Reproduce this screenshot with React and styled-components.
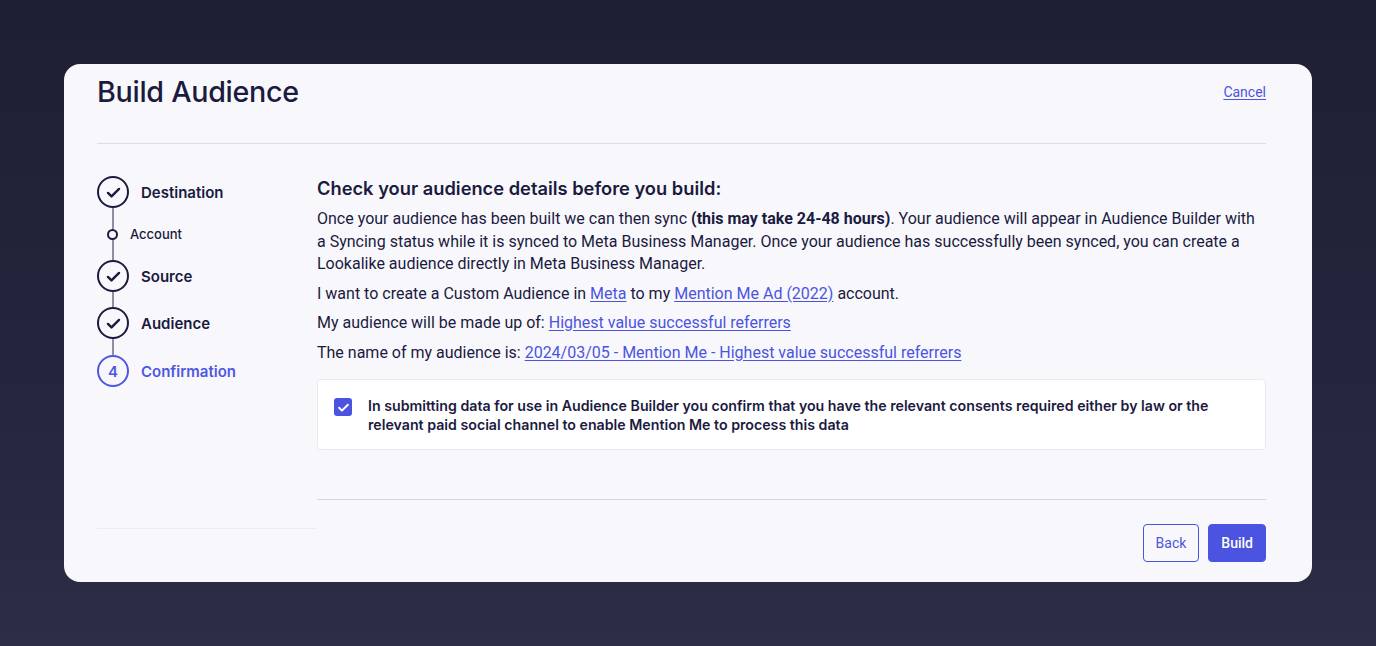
import styled, { createGlobalStyle } from "styled-components";

const GlobalStyle = createGlobalStyle`
  html, body {
    margin: 0;
    padding: 0;
  }
  body {
    background: linear-gradient(180deg, #1e1f35 0%, #25263d 60%, #2c2d46 100%);
    min-height: 646px;
    font-family: Roboto, "Liberation Sans", sans-serif;
    color: #1b1a3f;
  }
`;

const Page = styled.div`
  padding: 64px;
  box-sizing: border-box;
  width: 1376px;
  height: 646px;
`;

const Card = styled.div`
  background: #f8f8fc;
  border-radius: 16px;
  height: 518px;
  box-sizing: border-box;
  padding: 10px 46px 21px 33px;
  display: flex;
  flex-direction: column;
`;

const Header = styled.div`
  display: flex;
  justify-content: space-between;
  align-items: center;
  padding-bottom: 33px;
  border-bottom: 1px solid #dedde6;
`;

const Title = styled.h1`
  margin: 0;
  font-family: Inter, "Noto Sans", sans-serif;
  font-weight: 500;
  font-size: 28.7px;
  line-height: 36px;
  letter-spacing: -0.3px;
  color: #1b1a3f;
`;

const TextLink = styled.a`
  color: #4b54e0;
  text-decoration: underline;
  text-underline-offset: 2px;
  font-size: ${(p) => p.size || "inherit"};
  cursor: pointer;
`;

const Body = styled.div`
  display: grid;
  grid-template-columns: 220px 1fr;
  padding-top: 32px;
  flex: 1;
`;

const Aside = styled.div`
  height: 353px;
  box-sizing: border-box;
  border-bottom: 1px solid #ececf3;
  display: flex;
  flex-direction: column;
`;

const StepRow = styled.div`
  display: flex;
  align-items: center;
  gap: 12px;
`;

const Circle = styled.div`
  width: 32px;
  height: 32px;
  box-sizing: border-box;
  border-radius: 50%;
  border: 2px solid ${(p) => (p.active ? "#4d57e3" : "#1b1a3f")};
  color: ${(p) => (p.active ? "#4d57e3" : "#1b1a3f")};
  display: flex;
  align-items: center;
  justify-content: center;
  font-family: Inter, "Noto Sans", sans-serif;
  font-weight: 600;
  font-size: 15px;
  flex-shrink: 0;
`;

const StepLabel = styled.span`
  font-family: Inter, "Noto Sans", sans-serif;
  font-weight: 600;
  font-size: 15px;
  color: ${(p) => (p.active ? "#4d57e3" : "#1b1a3f")};
`;

const SubRow = styled.div`
  display: flex;
  align-items: center;
  gap: 12px;
  height: 11px;
  padding-left: 10px;
`;

const Dot = styled.div`
  width: 11px;
  height: 11px;
  box-sizing: border-box;
  border-radius: 50%;
  border: 2px solid #1b1a3f;
`;

const SubLabel = styled.span`
  font-family: Inter, "Noto Sans", sans-serif;
  font-weight: 500;
  font-size: 13px;
  line-height: 11px;
  color: #1b1a3f;
`;

const Connector = styled.div`
  width: 2px;
  height: ${(p) => p.h}px;
  background: #8f8ea3;
  margin-left: 15px;
`;

const Main = styled.div`
  display: flex;
  flex-direction: column;
`;

const Heading = styled.h2`
  margin: -2px 0 6px;
  font-family: Inter, "Noto Sans", sans-serif;
  font-weight: 600;
  font-size: 18.3px;
  line-height: 28px;
  color: #1b1a3f;
`;

const Para = styled.p`
  margin: 0 0 7px;
  font-size: 16px;
  line-height: 22.5px;
  color: #1b1a3f;
`;

const ConsentBox = styled.label`
  margin-top: 8px;
  background: #ffffff;
  border: 1px solid #e9e9f0;
  border-radius: 4px;
  padding: 16px 16px 15px 16px;
  display: flex;
  gap: 16px;
  align-items: flex-start;
`;

const CheckBox = styled.span`
  width: 18px;
  height: 18px;
  border-radius: 3px;
  background: #4b54e0;
  display: flex;
  align-items: center;
  justify-content: center;
  flex-shrink: 0;
  margin-top: 2px;
`;

const ConsentText = styled.span`
  font-family: Inter, "Noto Sans", sans-serif;
  font-weight: 600;
  font-size: 14.2px;
  line-height: 19px;
  color: #1b1a3f;
`;

const Divider = styled.div`
  margin-top: 49px;
  border-top: 1px solid #d6d5de;
`;

const Footer = styled.div`
  display: flex;
  justify-content: flex-end;
  gap: 9px;
  margin-top: 24px;
`;

const Button = styled.button`
  height: 38px;
  padding: 0 12px;
  border-radius: 4px;
  border: 1px solid #4b54e0;
  background: ${(p) => (p.primary ? "#4b54e0" : "transparent")};
  color: ${(p) => (p.primary ? "#ffffff" : "#4b54e0")};
  font-family: Roboto, "Liberation Sans", sans-serif;
  font-weight: ${(p) => (p.primary ? 500 : 400)};
  font-size: 14px;
  cursor: pointer;
`;

const Check = ({ size = 14, color = "currentColor", width = 2.6 }) => (
  <svg width={size} height={size} viewBox="0 0 24 24" fill="none">
    <path
      d="M5 12.5l4.5 4.5L19 7.5"
      stroke={color}
      strokeWidth={width}
      strokeLinecap="round"
      strokeLinejoin="round"
    />
  </svg>
);

export default function App() {
  return (
    <>
      <GlobalStyle />
      <Page>
        <Card>
          <Header>
            <Title>Build Audience</Title>
            <TextLink size="14px">Cancel</TextLink>
          </Header>
          <Body>
            <Aside>
              <StepRow>
                <Circle>
                  <Check size={19} width={3} />
                </Circle>
                <StepLabel>Destination</StepLabel>
              </StepRow>
              <Connector h={21} />
              <SubRow>
                <Dot />
                <SubLabel>Account</SubLabel>
              </SubRow>
              <Connector h={20} />
              <StepRow>
                <Circle>
                  <Check size={19} width={3} />
                </Circle>
                <StepLabel>Source</StepLabel>
              </StepRow>
              <Connector h={15} />
              <StepRow>
                <Circle>
                  <Check size={19} width={3} />
                </Circle>
                <StepLabel>Audience</StepLabel>
              </StepRow>
              <Connector h={16} />
              <StepRow>
                <Circle active>4</Circle>
                <StepLabel active>Confirmation</StepLabel>
              </StepRow>
            </Aside>
            <Main>
              <Heading>Check your audience details before you build:</Heading>
              <Para>
                Once your audience has been built we can then sync{" "}
                <b>(this may take 24-48 hours)</b>. Your audience will appear in
                Audience Builder with a Syncing status while it is synced to Meta
                Business Manager. Once your audience has successfully been synced,
                you can create a Lookalike audience directly in Meta Business
                Manager.
              </Para>
              <Para>
                I want to create a Custom Audience in <TextLink>Meta</TextLink> to
                my <TextLink>Mention Me Ad (2022)</TextLink> account.
              </Para>
              <Para>
                My audience will be made up of:{" "}
                <TextLink>Highest value successful referrers</TextLink>
              </Para>
              <Para>
                The name of my audience is:{" "}
                <TextLink>
                  2024/03/05 - Mention Me - Highest value successful referrers
                </TextLink>
              </Para>
              <ConsentBox>
                <CheckBox>
                  <Check size={15} color="#ffffff" width={3.2} />
                </CheckBox>
                <ConsentText>
                  In submitting data for use in Audience Builder you confirm that
                  you have the relevant consents required either by law or the
                  relevant paid social channel to enable Mention Me to process
                  this data
                </ConsentText>
              </ConsentBox>
              <Divider />
              <Footer>
                <Button>Back</Button>
                <Button primary>Build</Button>
              </Footer>
            </Main>
          </Body>
        </Card>
      </Page>
    </>
  );
}
